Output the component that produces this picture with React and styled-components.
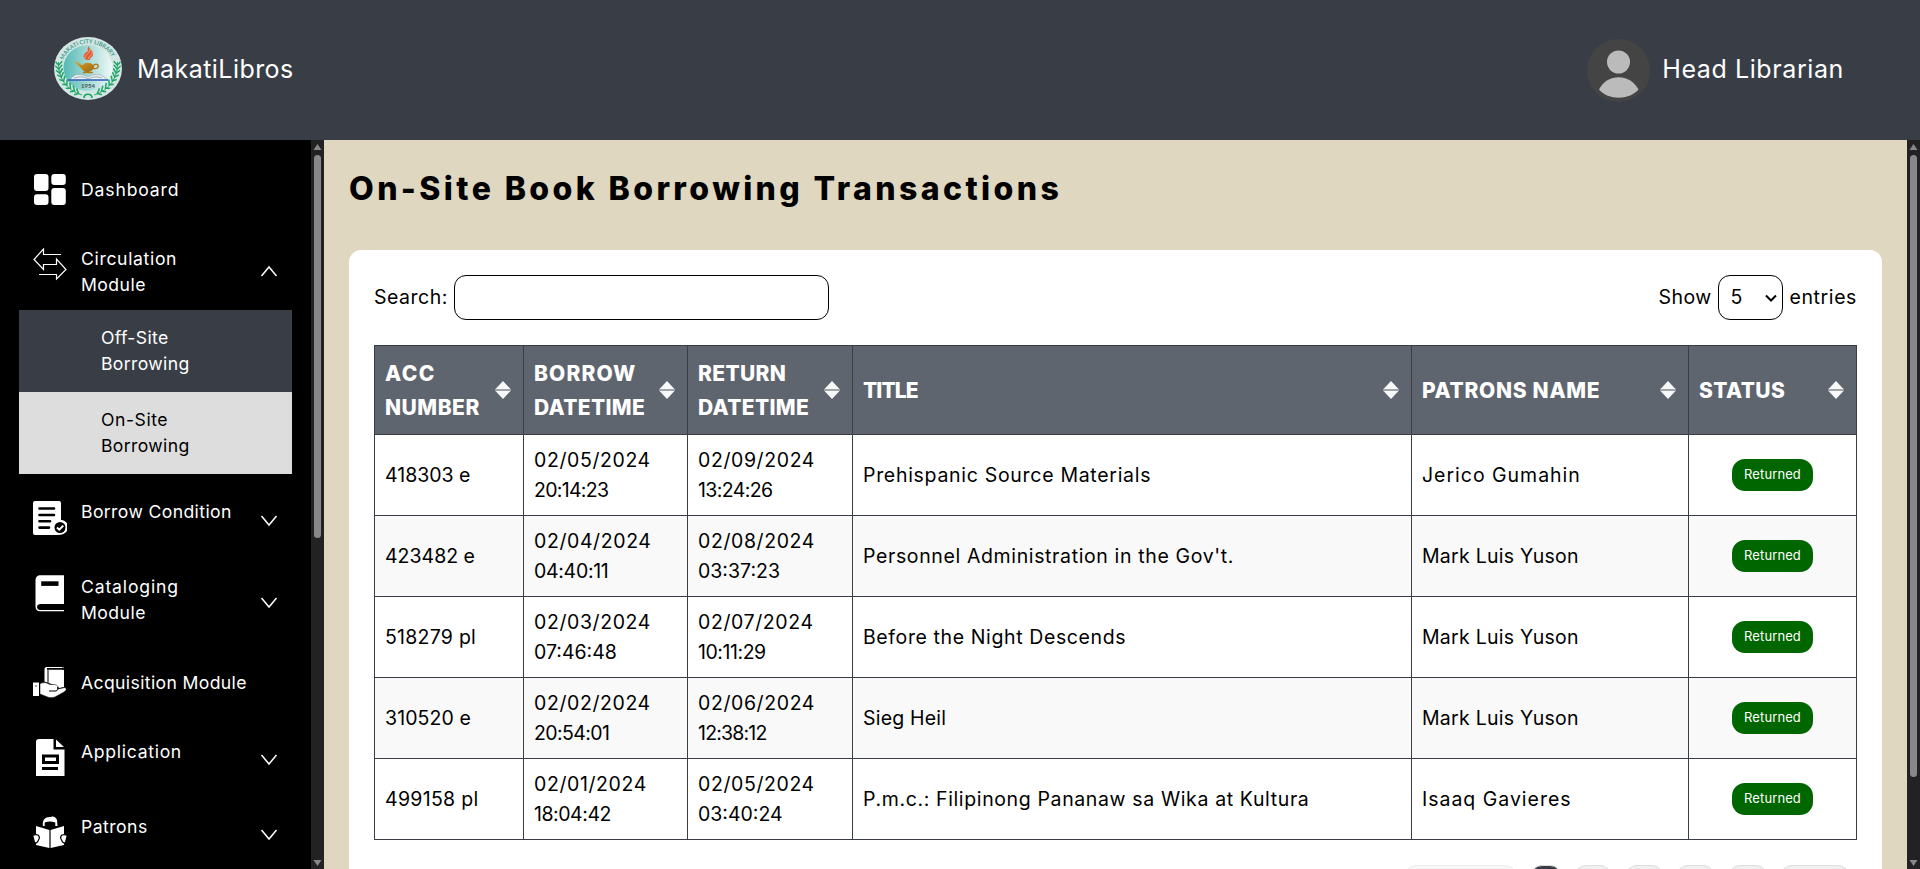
import React from 'react';
import styled, { createGlobalStyle } from 'styled-components';

const Global = createGlobalStyle`
  *{box-sizing:border-box}
  html,body{margin:0;padding:0;overflow:hidden;background:#000}
  body{font-family:Inter,"Liberation Sans",sans-serif;color:#000}
`;

// Letter spacing in px, keyed by label.
const tracking = {
  MakatiLibros: 0.45, 'Head Librarian': 0.6,
  Dashboard: 0.85, Circulation: 0.65, Module: 0.45, 'Off-Site': 0.35, 'On-Site': 0.55, Borrowing: 0.35,
  'Borrow Condition': 0.38, Cataloging: 0.85, 'Acquisition Module': 0.37, Application: 0.7, Patrons: 0.47,
  'On-Site Book Borrowing Transactions': 3.4,
  'Search:': 0.5, Show: 0.4, entries: 0.6, Returned: 0.1,
  ACC: 1.5, NUMBER: 0.5, BORROW: 1.1, DATETIME: 0.35, RETURN: 0.35, TITLE: -0.9, 'PATRONS NAME': 0.7, STATUS: 0.4,
  '518279 pl': 0.25, '310520 e': 0.1, '499158 pl': 0.3,
  '20:14:23': -0.7, '04:40:11': -0.3, '20:54:01': -0.6, '18:04:42': -0.45,
  '13:24:26': -0.6, '10:11:29': -0.45, '12:38:12': -0.8,
  'Prehispanic Source Materials': 0.7, "Personnel Administration in the Gov't.": 0.63,
  'Before the Night Descends': 0.61, 'Sieg Heil': 0.2, 'P.m.c.: Filipinong Pananaw sa Wika at Kultura': 0.63,
  'Jerico Gumahin': 0.98, 'Mark Luis Yuson': 0.25, 'Isaaq Gavieres': 0.98,
};
const Text = styled.span`
  white-space:nowrap;letter-spacing:${p => p.$ls}px;
`;
const T = ({ children }) => {
  const ls = tracking[children] ?? (/^\d\d\/\d\d\//.test(children) ? 0.6 : 0);
  return <Text $ls={ls}>{children}</Text>;
};

const Page = styled.div`height:869px;width:1920px;display:flex;flex-direction:column;overflow:hidden;`;
const Header = styled.header`
  height:140px;flex:none;background:#393e46;color:#fff;display:flex;align-items:center;
  justify-content:space-between;padding:0 76px 0 54px;font-size:25px;
`;
const Brand = styled.div`display:flex;align-items:center;`;
const BrandName = styled.div`padding-bottom:2px;`;
const BrandLogo = styled.svg`width:68px;height:63px;margin:0 15px 3px 0;`;
const Avatar = styled.svg`width:63px;height:63px;margin-right:12px;`;
const Body = styled.div`display:flex;flex:1;min-height:0;`;
const Side = styled.nav`width:311px;flex:none;background:#000;color:#fff;padding-top:24px;font-size:17.6px;line-height:26px;overflow:hidden;`;
const Item = styled.div`
  display:flex;align-items:flex-start;height:${p => p.$h}px;padding:${p => p.$pt || 0}px 33px 0 33px;
`;
const IconSlot = styled.svg`width:34px;height:${p => p.$h || 36}px;flex:none;margin-top:${p => p.$mt || 0}px;`;
const Label = styled.div`flex:1;margin:${p => p.$mt || 0}px 0 0 14px;display:flex;flex-direction:column;`;
const Chevron = styled.svg`width:18px;height:12px;flex:none;margin-top:${p => p.$mt}px;`;
const SubItem = styled.div`
  margin:0 19px;height:82px;padding:15px 0 0 82px;display:flex;flex-direction:column;
  background:${p => (p.$active ? '#ddd' : '#393e46')};color:${p => (p.$active ? '#000' : '#fff')};
`;
const Scroll = styled.div`
  width:13px;flex:none;background:#222;display:flex;flex-direction:column;align-items:center;padding:4px 0 3px;
`;
const ScrollArrow = styled.svg`width:9px;height:6px;flex:none;`;
const Thumb = styled.div`width:7px;height:${p => p.$h}px;border-radius:4px;background:#888;margin:5px 0 auto;`;
const Main = styled.main`flex:1;background:#dfd7bf;padding:0 25px;overflow:hidden;`;
const Title = styled.h1`margin:0;height:110px;padding-top:28px;font-size:32px;line-height:42px;font-weight:800;`;
const Card = styled.section`background:#fff;border-radius:12px;height:700px;padding:25px 25px 0;`;
const Controls = styled.div`display:flex;justify-content:space-between;height:70px;font-size:19.5px;line-height:45px;`;
const Control = styled.label`display:flex;gap:6px;`;
const Input = styled.input`width:375px;height:45px;border:1px solid #000;border-radius:12px;background:#fff;`;
const Select = styled.div`
  width:65px;height:45px;border:1px solid #000;border-radius:12px;display:flex;align-items:center;
  justify-content:space-between;padding:0 5px 0 12px;margin-right:1px;
`;
const Table = styled.div`border:1px solid #393e46;border-width:1px 0 0 1px;width:1483px;`;
const Row = styled.div`
  display:grid;grid-template-columns:149px 164px 165px 559px 277px 168px;height:${p => p.$h || 81}px;
  background:${p => p.$bg || '#fff'};
`;
const Cell = styled.div`
  border:1px solid #393e46;border-width:0 1px 1px 0;padding:0 10px;display:flex;flex-direction:column;
  justify-content:center;align-items:${p => (p.$center ? 'center' : 'flex-start')};font-size:19.5px;line-height:30px;
`;
const HeadCell = styled.div`
  border:1px solid #393e46;border-width:0 1px 1px 0;padding:0 12px 0 10px;display:flex;align-items:center;
  justify-content:space-between;color:#fff;font-weight:800;font-size:21px;line-height:34px;
`;
const HeadText = styled.div`display:flex;flex-direction:column;padding-top:2px;`;
const Badge = styled.span`
  width:81px;height:32px;border-radius:13px;background:#060;color:#fff;font-size:13px;line-height:31px;text-align:center;
`;
const Pager = styled.div`display:flex;justify-content:flex-end;gap:12.5px;padding:25px 7px 0 0;`;
const PageBtn = styled.span`
  width:${p => p.$w}px;height:40px;border-radius:12px;border:1px solid #ddd;
  background:${p => (p.$on ? '#393e46' : '#f0f0f0')};opacity:${p => (p.$disabled ? 0.5 : 1)};
`;

const Arrow = ({ down }) => (
  <ScrollArrow viewBox="0 0 9 6">
    <path d={down ? 'M0.5 0H8.5L4.5 6Z' : 'M0.5 6H8.5L4.5 0Z'} fill="#888" />
  </ScrollArrow>
);
const ScrollBar = ({ h }) => <Scroll><Arrow /><Thumb $h={h} /><Arrow down /></Scroll>;
const Sort = () => (
  <svg width="16" height="18" viewBox="0 0 16 18">
    <path d="M0 9H16" stroke="#a0a3a9" strokeWidth="2" />
    <path d="M8 0L15.5 8H.5ZM.5 10H15.5L8 18Z" fill="#f8f8f8" />
  </svg>
);
const Chev = ({ up, mt }) => (
  <Chevron $mt={mt} viewBox="0 0 18 12"><path d={up ? 'M1.5 11L9 2L16.5 11' : 'M1.5 1L9 10L16.5 1'} fill="none" stroke="#fff" strokeWidth="1.5" /></Chevron>
);

const leaves = [
  [4.5, 27, -5], [4.6, 31, -10], [5.5, 35, -16], [6.8, 39, -24], [9, 43, -34],
  [12, 47, -44], [15.5, 50.5, -54], [19.5, 53.5, -62], [23.5, 56, -70],
];
const Laurel = ({ flip }) => (
  <g transform={flip ? 'translate(68 0) scale(-1 1)' : undefined} fill="none" stroke="#1fa768">
    <path d="M4.500 25C4 40 12 53 28 58" strokeWidth=".9" />
    {leaves.map(([x, y, r]) => (
      <path key={y} transform={`translate(${x} ${y}) rotate(${r})`} d="M-2.800 -2.500L0 1.200L4 -2.500" strokeWidth="1.5" />
    ))}
  </g>
);
const Logo = () => (
  <BrandLogo viewBox="0 0 68 63">
    <defs>
      <linearGradient id="seal"><stop offset="0" stopColor="#56b9b4" /><stop offset="1" stopColor="#eff9f8" /></linearGradient>
      <linearGradient id="brass" x2="1" y2="1"><stop offset="0" stopColor="#e1a52b" /><stop offset="1" stopColor="#9a6410" /></linearGradient>
      <path id="arc" d="M9.500 23A26.500 25 0 0 1 60 25" />
    </defs>
    <ellipse cx="34" cy="31.500" rx="34" ry="31.500" fill="#d3e6e3" />
    <ellipse cx="34" cy="31" rx="24.500" ry="23" fill="url(#seal)" />
    <Laurel /><Laurel flip />
    <text fontSize="5.800" fontWeight="700" fill="#3f9c8c" fontFamily="Lato, sans-serif"><textPath href="#arc" textLength="60" lengthAdjust="spacingAndGlyphs">MAKATI CITY LIBRARY</textPath></text>
    <path d="M33 23C27 21 30 16 34 14C33 12 34 10 35 9C35 13 40 13 39 18C38 21 35 21 36 23Z" fill="#df5b36" />
    <path d="M31 21C31 17 36 17 36 12M34 22C35 19 39 18 38 14" stroke="#f6bda0" fill="none" strokeWidth=".8" />
    <path d="M20 24.500C24 24 26 28 29 28C30 25 37 25 39 28H40C41 33 36 34 35 35H31C28 33 24 27 20 24.500Z" fill="url(#brass)" />
    <path d="M39 29C41 26 45 27 44 30C43 32 40 32 39 31M29 35.500H39" fill="none" stroke="#b67b17" strokeWidth="1.500" />
    <path d="M15 43L21 38C27 37 31 38 34 40C37 38 42 37 47 38L54 43Z" fill="#eef6f6" stroke="#789" strokeWidth=".5" />
    <path d="M20 41C27 39 31 40 34 42C38 40 42 39 48 41" stroke="#6d8795" fill="none" strokeWidth=".7" />
    <path d="M14 43H54" stroke="#315fc0" strokeWidth="1.300" />
    <text x="34" y="51" textAnchor="middle" fontSize="6" fontWeight="700" fill="#455" fontFamily="Lato, sans-serif">1954</text>
    <path d="M30 61C30 56 38 56 38 61" fill="none" stroke="#18a45c" strokeWidth="1.600" />
  </BrandLogo>
);

const DashboardIcon = () => (
  <IconSlot $mt={8} viewBox="0 0 34 36"><g fill="#fff">
    <rect x="1" y="2" width="14.500" height="17" rx="3" /><rect x="18.300" y="2" width="14.500" height="11" rx="3" />
    <rect x="1" y="22.300" width="14.500" height="10.700" rx="3" /><rect x="18.300" y="16" width="14.500" height="17" rx="3" />
  </g></IconSlot>
);
const SwapIcon = () => <IconSlot viewBox="0 0 34 36"><path d="M28 6.500H10.500V1L1 11.500L10.500 21.500V16.500H23.500V11L33 21.500L23.500 31V26.500H6" fill="none" stroke="#fff" strokeWidth="1.200" /></IconSlot>;
const ConditionIcon = () => (
  <IconSlot viewBox="0 0 34 36">
    <path d="M2 1H26Q28 1 28 3V20A7 7 0 0 1 28 34Q26 35 24 35H2Q0 35 0 33V3Q0 1 2 1Z" fill="#fff" />
    <path d="M6.500 8.500H21M6.500 15H21M6.500 21.200H17M6.500 27.600H16" stroke="#000" strokeWidth="2.600" strokeLinecap="round" />
    <circle cx="27" cy="27.500" r="7.300" fill="#fff" /><circle cx="27" cy="27.500" r="5.500" fill="#000" />
    <path d="M24 27.500L26.300 29.700L30.300 25.600" fill="none" stroke="#fff" strokeWidth="2" />
  </IconSlot>
);
const BookIcon = () => (
  <IconSlot $h={37} viewBox="0 0 34 37">
    <path d="M6.500 .3H31V36.300H7Q2.500 36 2.500 31.500V5Q2.800 .8 6.500 .3Z" fill="#fff" />
    <path d="M8.200 8.600H25.500" stroke="#000" strokeWidth="4.600" />
    <path d="M31.500 29H7Q4 29.500 4 32Q4.300 34.800 7 35H31.500Z" fill="#000" />
  </IconSlot>
);
const HandBookIcon = () => (
  <IconSlot $mt={1} viewBox="0 0 34 36">
    <path d="M11.500 3Q11.500 1 13.500 1H31V2H14V3.800H31V21L26 22Q24 19 20 18.500L11.500 15.500Z" fill="#fff" />
    <path d="M15 4V17M30 1V4" stroke="#000" strokeWidth="1" />
    <path d="M0 16.500H6V30H0Z" fill="#fff" /><circle cx="3" cy="20" r=".7" />
    <path d="M7 17.500Q12 15 17 18.500H22Q26 19.500 25 23L32 21.500Q35 23.500 31 26L22 31Q17 33 12 30L7 28Z" fill="#fff" stroke="#000" strokeWidth=".5" />
    <path d="M16 25H23Q26 24 24.500 21" stroke="#000" fill="none" strokeWidth="1" />
  </IconSlot>
);
const FileIcon = () => (
  <IconSlot $h={38} viewBox="0 1 34 38">
    <path d="M6 1H20.500V11.500H31.500V38H3V4Q3 1 6 1ZM23 1.500L31 9H23Z" fill="#fff" />
    <path d="M10.500 18H24.500V24.500H10.500Z" fill="none" stroke="#000" strokeWidth="3" />
    <path d="M9 30.500H25" stroke="#000" strokeWidth="3" />
  </IconSlot>
);
const ReaderIcon = () => (
  <IconSlot $mt={1} viewBox="0 0 34 36">
    <path d="M10 11C9 5 12 2 17 2Q22 0 24 5L24.500 11H22.300V7.500Q17 5.500 11.700 7.500V11ZM3 11L16.400 15V33L3 30ZM31 11L17.600 15V33L31 30Z" fill="#fff" />
    <path d="M-.3 20.500Q2 19 5 20Q7.500 22 5.500 25Q4 29 1.500 27.500ZM34.300 20.500Q32 19 29 20Q26.500 22 28.500 25Q30 29 32.500 27.500Z" fill="#fff" stroke="#000" strokeWidth="1.200" />
  </IconSlot>
);

const heads = [['ACC', 'NUMBER'], ['BORROW', 'DATETIME'], ['RETURN', 'DATETIME'], ['TITLE'], ['PATRONS NAME'], ['STATUS']];
const rows = [
  ['418303 e', '02/05/2024', '20:14:23', '02/09/2024', '13:24:26', 'Prehispanic Source Materials', 'Jerico Gumahin'],
  ['423482 e', '02/04/2024', '04:40:11', '02/08/2024', '03:37:23', "Personnel Administration in the Gov't.", 'Mark Luis Yuson'],
  ['518279 pl', '02/03/2024', '07:46:48', '02/07/2024', '10:11:29', 'Before the Night Descends', 'Mark Luis Yuson'],
  ['310520 e', '02/02/2024', '20:54:01', '02/06/2024', '12:38:12', 'Sieg Heil', 'Mark Luis Yuson'],
  ['499158 pl', '02/01/2024', '18:04:42', '02/05/2024', '03:40:24', 'P.m.c.: Filipinong Pananaw sa Wika at Kultura', 'Isaaq Gavieres'],
];

export default function App() {
  return (
    <Page>
      <Global />
      <Header>
        <Brand><Logo /><BrandName><T>MakatiLibros</T></BrandName></Brand>
        <Brand>
          <Avatar viewBox="0 0 63 63"><circle cx="31.500" cy="31.500" r="31.500" fill="#444" /><circle cx="31.500" cy="23" r="11.500" fill="#bbb" /><path d="M12 50.500C20 34 43 34 51.500 50.500C42 61.500 21 61.500 12 50.500Z" fill="#bbb" /></Avatar>
          <BrandName><T>Head Librarian</T></BrandName>
        </Brand>
      </Header>
      <Body>
        <Side>
          <Item $h={84}><DashboardIcon /><Label $mt={13}><T>Dashboard</T></Label></Item>
          <Item $h={62}><SwapIcon /><Label $mt={-2}><T>Circulation</T><T>Module</T></Label><Chev up mt={17} /></Item>
          <SubItem><T>Off-Site</T><T>Borrowing</T></SubItem>
          <SubItem $active><T>On-Site</T><T>Borrowing</T></SubItem>
          <Item $h={101} $pt={26}><ConditionIcon /><Label $mt={-1}><T>Borrow Condition</T></Label><Chev mt={15} /></Item>
          <Item $h={90}><BookIcon /><Label $mt={-1}><T>Cataloging</T><T>Module</T></Label><Chev mt={22} /></Item>
          <Item $h={74}><HandBookIcon /><Label $mt={5}><T>Acquisition Module</T></Label></Item>
          <Item $h={75}><FileIcon /><Label><T>Application</T></Label><Chev mt={15} /></Item>
          <Item $h={60}><ReaderIcon /><Label><T>Patrons</T></Label><Chev mt={15} /></Item>
        </Side>
        <ScrollBar h={383} />
        <Main>
          <Title><T>On-Site Book Borrowing Transactions</T></Title>
          <Card>
            <Controls>
              <Control><T>Search:</T><Input /></Control>
              <Control>
                <T>Show</T>
                <Select><T>5</T><svg width="12" height="8" viewBox="0 0 12 8"><path d="M1 1.500L6 6.500L11 1.500" fill="none" stroke="#000" strokeWidth="2" /></svg></Select>
                <T>entries</T>
              </Control>
            </Controls>
            <Table>
              <Row $h={89} $bg="#5f656f">
                {heads.map((h, i) => <HeadCell key={i}><HeadText>{h.map(t => <T key={t}>{t}</T>)}</HeadText><Sort /></HeadCell>)}
              </Row>
              {rows.map((r, i) => (
                <Row key={r[0]} $bg={i % 2 ? '#f9f9f9' : '#fff'}>
                  <Cell><T>{r[0]}</T></Cell>
                  <Cell><T>{r[1]}</T><T>{r[2]}</T></Cell>
                  <Cell><T>{r[3]}</T><T>{r[4]}</T></Cell>
                  <Cell><T>{r[5]}</T></Cell>
                  <Cell><T>{r[6]}</T></Cell>
                  <Cell $center><Badge><T>Returned</T></Badge></Cell>
                </Row>
              ))}
            </Table>
            <Pager>
              <PageBtn $w={113} $disabled /><PageBtn $w={32} $on /><PageBtn $w={38} /><PageBtn $w={39} /><PageBtn $w={39} /><PageBtn $w={40} /><PageBtn $w={70} />
            </Pager>
          </Card>
        </Main>
        <ScrollBar h={622} />
      </Body>
    </Page>
  );
}
